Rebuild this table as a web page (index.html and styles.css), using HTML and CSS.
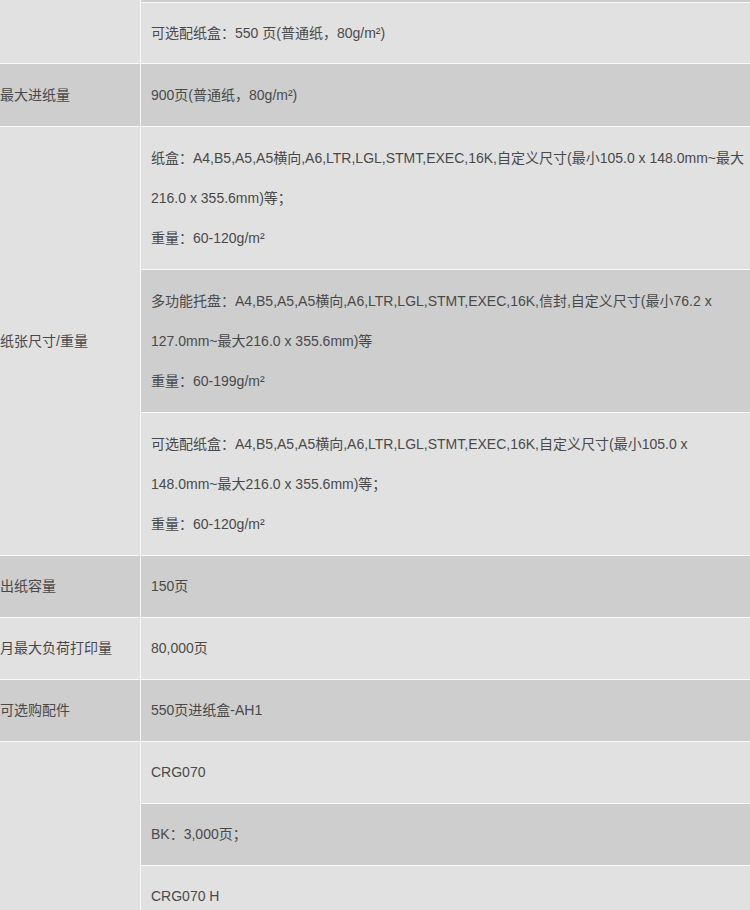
FILE: index.html
```html
<!DOCTYPE html>
<html lang="zh-CN">
  <head>
    <meta charset="UTF-8" />
    <meta name="viewport" content="width=device-width, initial-scale=1.0" />
    <title>产品参数</title>
    <link rel="stylesheet" href="styles.css">
  </head>
  <body>
    <div class="specs">
      <table class="spec-table">
        <tr>
          <td class="label" rowspan="3">进纸容量</td>
          <td class="value">纸盒：250 页(普通纸，80g/m²)</td>
        </tr>
        <tr>
          <td class="value">多功能托盘：100 页(普通纸，80g/m²)</td>
        </tr>
        <tr class="short">
          <td class="value">可选配纸盒：550 页(普通纸，80g/m²)</td>
        </tr>
        <tr>
          <td class="label">最大进纸量</td>
          <td class="value">900页(普通纸，80g/m²)</td>
        </tr>
        <tr>
          <td class="label" rowspan="3">纸张尺寸/重量</td>
          <td class="value">
            纸盒：A4,B5,A5,A5横向,A6,LTR,LGL,STMT,EXEC,16K,自定义尺寸(最小105.0 x 148.0mm~最大216.0 x 355.6mm)等；<br>
            重量：60-120g/m²
          </td>
        </tr>
        <tr>
          <td class="value">
            多功能托盘：A4,B5,A5,A5横向,A6,LTR,LGL,STMT,EXEC,16K,信封,自定义尺寸(最小76.2 x 127.0mm~最大216.0 x 355.6mm)等<br>
            重量：60-199g/m²
          </td>
        </tr>
        <tr>
          <td class="value">
            可选配纸盒：A4,B5,A5,A5横向,A6,LTR,LGL,STMT,EXEC,16K,自定义尺寸(最小105.0 x 148.0mm~最大216.0 x 355.6mm)等；<br>
            重量：60-120g/m²
          </td>
        </tr>
        <tr class="tight">
          <td class="label">出纸容量</td>
          <td class="value">150页</td>
        </tr>
        <tr class="tight">
          <td class="label">月最大负荷打印量</td>
          <td class="value">80,000页</td>
        </tr>
        <tr class="tight">
          <td class="label">可选购配件</td>
          <td class="value">550页进纸盒-AH1</td>
        </tr>
        <tr class="tight">
          <td class="label" rowspan="6">耗材</td>
          <td class="value">CRG070</td>
        </tr>
        <tr class="tight">
          <td class="value">BK：3,000页；</td>
        </tr>
        <tr class="tight">
          <td class="value">CRG070 H</td>
        </tr>
        <tr class="tight">
          <td class="value">BK：10,200页；</td>
        </tr>
        <tr class="tight">
          <td class="value">硒鼓一体式设计</td>
        </tr>
        <tr class="tight">
          <td class="value">随机硒鼓 BK：3,000页</td>
        </tr>
      </table>
    </div>
  </body>
</html>
```

FILE: styles.css
```css
body {
  margin: 0;
  background: #fafafa;
  font-family: "Liberation Sans", "Noto Sans CJK SC", sans-serif;
  font-size: 14px;
  color: #4a4a4a;
  overflow: hidden;
}
.specs {
  margin-top: -124px;
  margin-left: -11px;
}
.spec-table {
  border-collapse: separate;
  border-spacing: 1px;
  background: #fafafa;
  table-layout: fixed;
  width: 767px;
}
.spec-table td {
  padding: 11px 10px;
  line-height: 40px;
  vertical-align: middle;
  text-align: left;
}
.spec-table tr:nth-child(odd) td {
  background: #e1e1e1;
}
.spec-table tr:nth-child(even) td {
  background: #cecece;
}
.spec-table tr.short td {
  padding: 10px;
}
.spec-table tr.tight td {
  padding: 10px 10px 11px;
}
.label {
  width: 130px;
}
.value {
  width: 594px;
}
```
